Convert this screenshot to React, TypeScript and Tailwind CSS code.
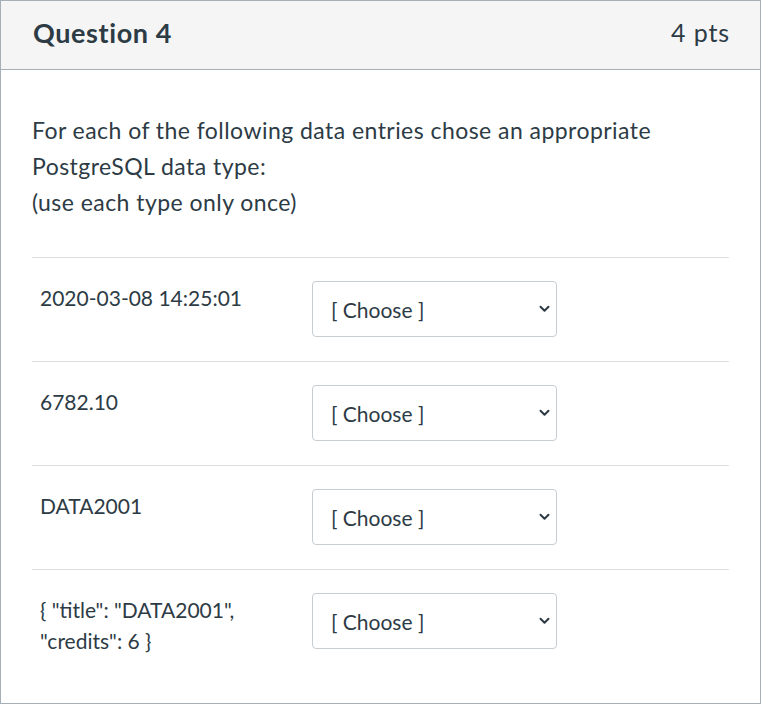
import React from "react";

const rows: string[][] = [
  ["2020-03-08 14:25:01"],
  ["6782.10"],
  ["DATA2001"],
  ['{ "title": "DATA2001",', '"credits": 6 }'],
];

function Select() {
  return (
    <div className="flex h-[56px] w-[245px] items-center justify-between rounded-[4px] border border-[#c7cdd1] bg-white pl-[18px] pr-[6px]">
      <span className="text-[21px] leading-none text-[#2d3b45]">[ Choose ]</span>
      <svg width="11" height="8" viewBox="0 0 11 8">
        <path d="M1.5 1.8 L5.5 5.8 L9.5 1.8" fill="none" stroke="#2d3b45" strokeWidth="2" strokeLinecap="round" strokeLinejoin="round" />
      </svg>
    </div>
  );
}

export default function App() {
  return (
    <div className="min-h-[711px] w-[767px] bg-white" style={{ fontFamily: "Lato, 'Noto Sans', sans-serif" }}>
      <div className="w-[761px] border border-[#a5afb5] text-[#2d3b45]">
        <div className="flex h-[69px] items-center justify-between border-b border-[#a5afb5] bg-[#f5f5f5] pb-[5px] pl-[32px] pr-[30px]">
          <h2 className="text-[27px] font-bold leading-none tracking-[0.6px]">Question 4</h2>
          <span className="text-[25px] leading-none tracking-[0.9px]">4 pts</span>
        </div>
        <div className="px-[31px] pb-[23px] pt-[42px]">
          <p className="text-[23px] leading-[36px] tracking-[0.45px]">
            For each of the following data entries chose an appropriate
            <br />
            PostgreSQL data type:
            <br />
            (use each type only once)
          </p>
          <div className="mt-[37px]">
            {rows.map((r, i) => (
              <div key={i} className="flex border-t border-[#dcdfe1] pb-[24px] pt-[23px]">
                <div className="w-[280px] pl-[8px] pt-[1px] text-[21px] leading-[31px]">
                  {r.map((l, j) => (
                    <div key={j}>{l}</div>
                  ))}
                </div>
                <Select />
              </div>
            ))}
          </div>
        </div>
      </div>
    </div>
  );
}
